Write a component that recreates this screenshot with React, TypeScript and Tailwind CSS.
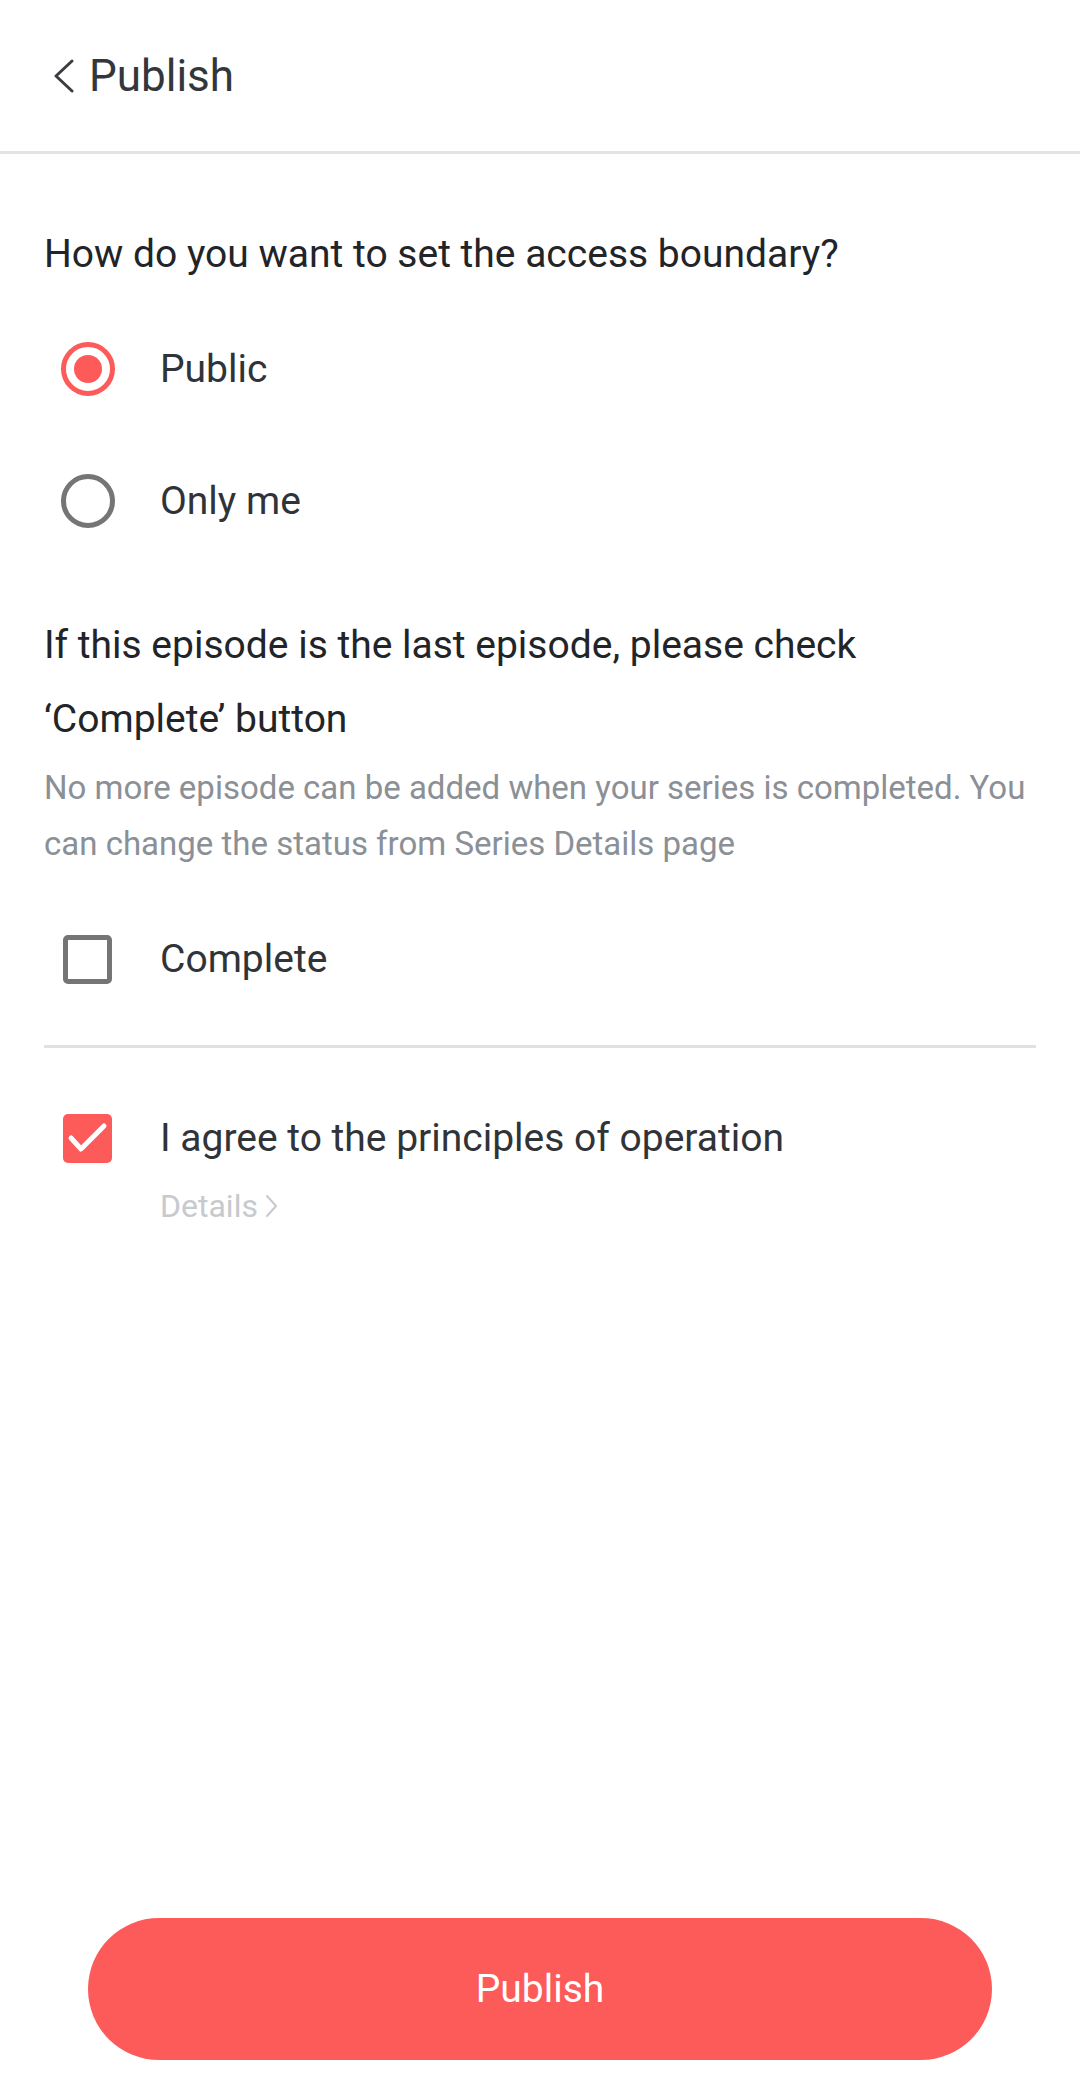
import React, { useState } from 'react';

function Radio({ checked }: { checked: boolean }) {
  return (
    <div
      className={`w-[54px] h-[54px] rounded-full border-[5px] flex items-center justify-center ${
        checked ? 'border-[#fd5a5a]' : 'border-[#757575]'
      }`}
    >
      {checked && <div className="w-[28px] h-[28px] rounded-full bg-[#fd5a5a]" />}
    </div>
  );
}

function Checkbox({ checked }: { checked: boolean }) {
  if (checked) {
    return (
      <div className="w-[49px] h-[49px] rounded-[5px] bg-[#fd5a5a] flex items-center justify-center">
        <svg width="49" height="49" viewBox="0 0 49 49" fill="none">
          <path d="M8 24 L18 35 L41 12" stroke="#fff" strokeWidth="5" strokeLinecap="round" strokeLinejoin="round" />
        </svg>
      </div>
    );
  }
  return <div className="w-[49px] h-[49px] rounded-[5px] border-[5px] border-[#757575]" />;
}

export default function App() {
  const [access, setAccess] = useState<'public' | 'me'>('public');
  const [complete, setComplete] = useState(false);
  const [agree, setAgree] = useState(true);

  return (
    <div className="h-screen flex flex-col bg-white font-['Roboto','Noto_Sans',sans-serif]">
      {/* header */}
      <div className="h-[154px] shrink-0 flex items-center pl-[53px] border-b-[3px] border-[#e2e3e5]">
        <svg width="22" height="34" viewBox="0 0 22 34" fill="none" className="mr-[14px]">
          <path d="M19 2 L3 17 L19 32" stroke="#3a3d41" strokeWidth="3" strokeLinecap="round" strokeLinejoin="round" />
        </svg>
        <h1 className="text-[44px] leading-none text-[#33373b]">Publish</h1>
      </div>

      <div className="px-[44px]">
        <p className="mt-[76px] text-[39px] leading-[48px] text-[#222427]">
          How do you want to set the access boundary?
        </p>

        {/* access options */}
        <div className="mt-[25px]">
          <button onClick={() => setAccess('public')} className="w-full h-[132px] flex items-center pl-[17px] text-left">
            <Radio checked={access === 'public'} />
            <span className="ml-[45px] text-[39px] text-[#303338]">Public</span>
          </button>
          <button onClick={() => setAccess('me')} className="w-full h-[132px] flex items-center pl-[17px] text-left">
            <Radio checked={access === 'me'} />
            <span className="ml-[45px] text-[39px] text-[#303338]">Only me</span>
          </button>
        </div>

        <p className="mt-[41px] text-[39px] leading-[74px] text-[#222427]">
          If this episode is the last episode, please check
          <br />
          ‘Complete’ button
        </p>
        <p className="mt-[4px] text-[33px] leading-[56px] text-[#8b9096]">
          No more episode can be added when your series is completed. You can change the status from Series Details page
        </p>

        <button onClick={() => setComplete(!complete)} className="w-full h-[120px] mt-[27px] flex items-center pl-[19px] text-left">
          <Checkbox checked={complete} />
          <span className="ml-[48px] text-[39px] text-[#303338]">Complete</span>
        </button>

        <div className="h-[3px] bg-[#e0e1e3] mt-[26px]" />

        <div className="flex pl-[19px] pt-[66px]">
          <button onClick={() => setAgree(!agree)} className="shrink-0 h-[49px]">
            <Checkbox checked={agree} />
          </button>
          <div className="ml-[48px]">
            <p className="text-[39px] leading-[49px] text-[#303338]">I agree to the principles of operation</p>
            <div className="mt-[26px] flex items-center text-[32px] leading-[34px] text-[#c6cacf]">
              Details
              <svg width="14" height="24" viewBox="0 0 14 24" fill="none" className="ml-[6px]">
                <path d="M3 2 L12 12 L3 22" stroke="#c6cacf" strokeWidth="2" strokeLinecap="round" strokeLinejoin="round" />
              </svg>
            </div>
          </div>
        </div>
      </div>

      <div className="flex-1" />

      <div className="px-[88px] pb-[39px]">
        <button className="w-full h-[142px] rounded-full bg-[#fd5a5a] text-white text-[39px]">Publish</button>
      </div>
    </div>
  );
}
